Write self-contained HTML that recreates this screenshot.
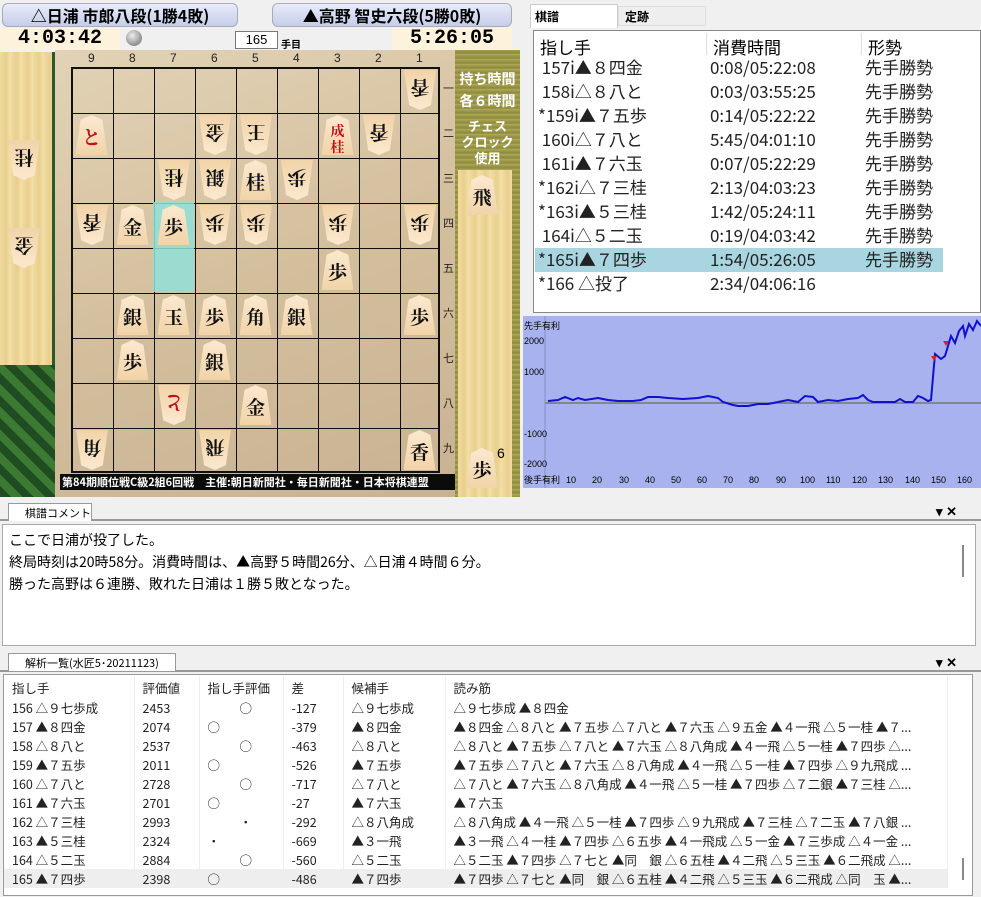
<!DOCTYPE html>
<html><head><meta charset="utf-8"><style>
*{margin:0;padding:0;box-sizing:border-box}
body{width:981px;height:897px;overflow:hidden;background:#f0f0f0;font-family:"Liberation Sans","Noto Sans CJK JP",sans-serif;position:relative}
.a{position:absolute}
.pc{position:absolute;width:32px;height:40px;background:linear-gradient(#fbe9cf,#f1d3a8);clip-path:polygon(50% 0,84% 12%,100% 100%,0 100%,16% 12%);font:bold 19px "Noto Serif CJK SC","Noto Sans CJK JP",serif;color:#111;text-align:center;line-height:44px}
.g{transform:rotate(180deg)}
.r{color:#c0101a}
.nb{font-size:12px;color:#222;position:absolute}
table{border-collapse:collapse}
.kf td{height:24px;line-height:24px;font:17px/24px "Noto Sans CJK JP",sans-serif;color:#222;white-space:nowrap;padding:0}
.kf tr{height:24px}
.an td{height:19px;font:12.5px "Noto Sans CJK JP",sans-serif;color:#222;white-space:nowrap;padding-left:8px;border-right:1px solid #eee}
.an tr:nth-child(even){background:#d8dae0}
</style></head><body>
<div class="a" style="left:2px;top:3px;width:236px;height:24px;border-radius:6px;background:linear-gradient(#e8ecfa,#c5cde8);border:1px solid #aab;font:bold 16px 'Noto Sans CJK JP';text-align:center;line-height:23px">△日浦 市郎八段(1勝4敗)</div>
<div class="a" style="left:272px;top:3px;width:240px;height:24px;border-radius:6px;background:linear-gradient(#e8ecfa,#c5cde8);border:1px solid #aab;font:bold 16px 'Noto Sans CJK JP';text-align:center;line-height:23px">▲高野 智史六段(5勝0敗)</div>
<div class="a" style="left:0;top:28px;width:120px;height:22px;background:#fdf3dc;font:bold 20px 'Liberation Mono',monospace;text-align:center;line-height:22px">4:03:42</div>
<div class="a" style="left:126px;top:30px;width:16px;height:16px;border-radius:50%;background:radial-gradient(circle at 40% 35%,#eee,#666)"></div>
<div class="a" style="left:235px;top:31px;width:43px;height:18px;background:#fff;border:1px solid #777;font:13px 'Liberation Sans';text-align:center;line-height:16px">165</div>
<div class="a" style="left:281px;top:36px;font:bold 10px 'Noto Sans CJK JP'">手目</div>
<div class="a" style="left:392px;top:28px;width:120px;height:22px;background:#fdf3dc;font:bold 20px 'Liberation Mono',monospace;text-align:center;line-height:22px">5:26:05</div>
<div class="a" style="left:0;top:52px;width:52px;height:313px;background:repeating-linear-gradient(90deg,#f0dba0,#e9cf8c 6px,#f3e0ab 11px)"></div>
<div class="a" style="left:0;top:365px;width:55px;height:132px;background:repeating-linear-gradient(45deg,#1f4d21 0 8px,#3c7a34 8px 16px)"></div>
<div class="a" style="left:52px;top:52px;width:4px;height:313px;background:#2b5a2a"></div>
<div class="a" style="left:55px;top:50px;width:402px;height:447px;background:linear-gradient(160deg,#e2d3b6,#d4bf9d 50%,#c8b292);"></div>
<div class="a" style="left:71px;top:67px;width:369px;height:406px;border:2px solid #111;background-image:linear-gradient(90deg,#111 1px,transparent 1px),linear-gradient(#111 1px,transparent 1px);background-size:41px 45px;background-position:-1px -1px"></div>
<div class="a" style="left:153px;top:202px;width:41px;height:90px;background:#8fe0d8;opacity:.85"></div>
<div class="a" style="left:60px;top:474px;width:395px;height:16px;background:#0b0b0b;color:#fff;font:bold 11px 'Noto Sans CJK JP';line-height:16px;padding-left:2px">第84期順位戦C級2組6回戦　主催:朝日新聞社・毎日新聞社・日本将棋連盟</div>
<div class="a" style="left:455px;top:50px;width:65px;height:447px;background:repeating-linear-gradient(#a8a050,#8c8a3c 3px,#b5ae62 5px)"></div>
<div class="a" style="left:458px;top:170px;width:54px;height:327px;background:repeating-linear-gradient(90deg,#f0dba0,#e9cf8c 6px,#f3e0ab 11px)"></div>
<div class="a" style="left:455px;top:68px;width:65px;color:#fff;font:bold 14px 'Noto Sans CJK JP';text-align:center;line-height:22px">持ち時間<br>各６時間</div>
<div class="a" style="left:455px;top:118px;width:65px;color:#fff;font:bold 13px 'Noto Sans CJK JP';text-align:center;line-height:16px">チェス<br>クロック<br>使用</div>
<div class="a" style="left:497px;top:445px;font:14px 'Liberation Sans'">6</div>
<div id="pcs"></div>
<div class="a" style="left:530px;top:4px;width:88px;height:24px;background:#fff;border:1px solid #ccc;border-bottom:none;font:bold 12px 'Noto Sans CJK JP';padding:3px 4px">棋譜</div>
<div class="a" style="left:618px;top:6px;width:88px;height:20px;background:#eee;border:1px solid #ddd;font:bold 12px 'Noto Sans CJK JP';padding:1px 6px">定跡</div>
<div class="a" style="left:533px;top:30px;width:448px;height:283px;background:#fff;border:1px solid #888"></div>
<div class="a" style="left:540px;top:34px;font:17px 'Noto Sans CJK JP'">指し手</div>
<div class="a" style="left:713px;top:34px;font:17px 'Noto Sans CJK JP'">消費時間</div>
<div class="a" style="left:868px;top:34px;font:17px 'Noto Sans CJK JP'">形勢</div>
<div class="a" style="left:706px;top:33px;width:1px;height:22px;background:#ddd"></div>
<div class="a" style="left:861px;top:33px;width:1px;height:22px;background:#ddd"></div>
<div class="a" style="left:535px;top:248px;width:408px;height:24px;background:#a9d5e0"></div>
<table class="a kf" style="left:538px;top:55px">
<tr><td style="width:172px">&nbsp;157i▲８四金</td><td style="width:155px">0:08/05:22:08</td><td>先手勝勢</td></tr>
<tr><td>&nbsp;158i△８八と</td><td>0:03/03:55:25</td><td>先手勝勢</td></tr>
<tr><td>*159i▲７五歩</td><td>0:14/05:22:22</td><td>先手勝勢</td></tr>
<tr><td>&nbsp;160i△７八と</td><td>5:45/04:01:10</td><td>先手勝勢</td></tr>
<tr><td>&nbsp;161i▲７六玉</td><td>0:07/05:22:29</td><td>先手勝勢</td></tr>
<tr><td>*162i△７三桂</td><td>2:13/04:03:23</td><td>先手勝勢</td></tr>
<tr><td>*163i▲５三桂</td><td>1:42/05:24:11</td><td>先手勝勢</td></tr>
<tr><td>&nbsp;164i△５二玉</td><td>0:19/04:03:42</td><td>先手勝勢</td></tr>
<tr><td>*165i▲７四歩</td><td>1:54/05:26:05</td><td>先手勝勢</td></tr>
<tr><td>*166 △投了</td><td>2:34/04:06:16</td><td></td></tr>
</table>
<svg class="a" style="left:523px;top:316px" width="458" height="172">
<rect width="458" height="172" fill="#a7b2ee"/>
<line x1="22" y1="87" x2="458" y2="87" stroke="#777" stroke-width="1.5"/>
<line x1="22" y1="0" x2="22" y2="172" stroke="#8890c0"/>
<g font-family="Liberation Sans" font-size="9" fill="#000">
<text x="1" y="13" font-family="Noto Sans CJK JP" font-size="9">先手有利</text>
<text x="1" y="28">2000</text><text x="1" y="59">1000</text><text x="1" y="121">-1000</text><text x="1" y="151">-2000</text>
<text x="1" y="167" font-family="Noto Sans CJK JP" font-size="9">後手有利</text>
<text x="43" y="167">10</text><text x="69" y="167">20</text><text x="96" y="167">30</text><text x="122" y="167">40</text><text x="148" y="167">50</text><text x="174" y="167">60</text><text x="200" y="167">70</text><text x="226" y="167">80</text><text x="253" y="167">90</text><text x="277" y="167">100</text><text x="303" y="167">110</text><text x="329" y="167">120</text><text x="355" y="167">130</text><text x="382" y="167">140</text><text x="408" y="167">150</text><text x="434" y="167">160</text>
</g>
<polyline fill="none" stroke="#1010d0" stroke-width="2" points="25,85 35,84 42,81 50,84 55,82 62,84 75,82 85,84 95,85 110,85 118,84 125,81 135,81 145,82 160,83 175,82 185,80 195,82 200,86 210,89 215,90 225,90 235,88 245,88 255,86 265,84 275,86 282,80 290,81 295,86 305,84 315,85 325,83 335,82 340,79 345,84 350,86 360,86 372,86 377,83 382,86 390,86 395,80 400,82 405,85 408,84 412,38 418,43 422,40 428,20 432,27 436,15 440,10 442,20 446,8 450,14 454,5 458,10"/>
<polygon points="408,40 414,40 411,45" fill="#e02020"/><polygon points="420,25 426,25 423,30" fill="#e02020"/>
</svg>
<div class="a" style="left:0;top:519px;width:981px;height:2px;background:#999"></div>
<div class="a" style="left:8px;top:503px;width:84px;height:18px;background:#fff;border:1px solid #999;border-bottom:none;font:11px 'Noto Sans CJK JP';padding:1px 0 0 16px">棋譜コメント</div>
<div class="a" style="left:936px;top:504px;font:bold 13px 'Liberation Sans'">▾ ✕</div>
<div class="a" style="left:2px;top:524px;width:974px;height:122px;background:#fff;border:1px solid #aaa;font:14px 'Noto Sans CJK JP';line-height:22px;padding:4px 6px">ここで日浦が投了した。<br>終局時刻は20時58分。消費時間は、▲高野５時間26分、△日浦４時間６分。<br>勝った高野は６連勝、敗れた日浦は１勝５敗となった。</div>
<div class="a" style="left:962px;top:545px;width:2px;height:32px;background:#888"></div>
<div class="a" style="left:0;top:670px;width:981px;height:2px;background:#999"></div>
<div class="a" style="left:8px;top:653px;width:168px;height:18px;background:#fff;border:1px solid #999;border-bottom:none;font:11px 'Noto Sans CJK JP';padding:1px 0 0 16px">解析一覧(水匠5･20211123)</div>
<div class="a" style="left:936px;top:655px;font:bold 13px 'Liberation Sans'">▾ ✕</div>
<div class="a" style="left:3px;top:674px;width:970px;height:222px;background:#fff;border:1px solid #999"></div>
<div class="a" style="left:962px;top:858px;width:2px;height:22px;background:#888"></div>
<table class="a an" style="left:4px;top:676px;width:944px">
<tr style="background:#fff"><td style="width:130px;height:22px">指し手</td><td style="width:65px">評価値</td><td style="width:84px">指し手評価</td><td style="width:60px">差</td><td style="width:102px">候補手</td><td>読み筋</td></tr>
<tr style="background:#fff"><td>156 △９七歩成</td><td>2453</td><td style="padding-left:40px">○</td><td>-127</td><td>△９七歩成</td><td>△９七歩成 ▲８四金</td></tr>
<tr><td>157 ▲８四金</td><td>2074</td><td>○</td><td>-379</td><td>▲８四金</td><td>▲８四金 △８八と ▲７五歩 △７八と ▲７六玉 △９五金 ▲４一飛 △５一桂 ▲７...</td></tr>
<tr style="background:#fff"><td>158 △８八と</td><td>2537</td><td style="padding-left:40px">○</td><td>-463</td><td>△８八と</td><td>△８八と ▲７五歩 △７八と ▲７六玉 △８八角成 ▲４一飛 △５一桂 ▲７四歩 △...</td></tr>
<tr><td>159 ▲７五歩</td><td>2011</td><td>○</td><td>-526</td><td>▲７五歩</td><td>▲７五歩 △７八と ▲７六玉 △８八角成 ▲４一飛 △５一桂 ▲７四歩 △９九飛成 ...</td></tr>
<tr style="background:#fff"><td>160 △７八と</td><td>2728</td><td style="padding-left:40px">○</td><td>-717</td><td>△７八と</td><td>△７八と ▲７六玉 △８八角成 ▲４一飛 △５一桂 ▲７四歩 △７二銀 ▲７三桂 △...</td></tr>
<tr><td>161 ▲７六玉</td><td>2701</td><td>○</td><td>-27</td><td>▲７六玉</td><td>▲７六玉</td></tr>
<tr style="background:#fff"><td>162 △７三桂</td><td>2993</td><td style="padding-left:40px">・</td><td>-292</td><td>△８八角成</td><td>△８八角成 ▲４一飛 △５一桂 ▲７四歩 △９九飛成 ▲７三桂 △７二玉 ▲７八銀 ...</td></tr>
<tr><td>163 ▲５三桂</td><td>2324</td><td>・</td><td>-669</td><td>▲３一飛</td><td>▲３一飛 △４一桂 ▲７四歩 △６五歩 ▲４一飛成 △５一金 ▲７三歩成 △４一金 ...</td></tr>
<tr style="background:#fff"><td>164 △５二玉</td><td>2884</td><td style="padding-left:40px">○</td><td>-560</td><td>△５二玉</td><td>△５二玉 ▲７四歩 △７七と ▲同　銀 △６五桂 ▲４二飛 △５三玉 ▲６二飛成 △...</td></tr>
<tr style="background:#eee"><td>165 ▲７四歩</td><td>2398</td><td>○</td><td>-486</td><td>▲７四歩</td><td>▲７四歩 △７七と ▲同　銀 △６五桂 ▲４二飛 △５三玉 ▲６二飛成 △同　玉 ▲...</td></tr>
</table>
<script>
var P=[[1,1,'香',1],[9,2,'と',0,1],[6,2,'金',1],[5,2,'王',1],[3,2,'成<br>桂',0,1],[2,2,'香',1],
[7,3,'桂',1],[6,3,'銀',1],[5,3,'桂',0],[4,3,'歩',1],
[9,4,'香',1],[8,4,'金',0],[7,4,'歩',0],[6,4,'歩',1],[5,4,'歩',1],[3,4,'歩',1],[1,4,'歩',1],
[3,5,'歩',0],[8,6,'銀',0],[7,6,'玉',0],[6,6,'歩',0],[5,6,'角',0],[4,6,'銀',0],[1,6,'歩',0],
[8,7,'歩',0],[6,7,'銀',0],[7,8,'と',1,1],[5,8,'金',0],[9,9,'角',1],[6,9,'飛',1],[1,9,'香',0]];
var h='';
P.forEach(function(p){var x=71+41*(9-p[0])+4.5,y=67+45*(p[1]-1)+3;
var st=p[2].length>1?'font-size:14px;line-height:16px;padding-top:8px':'';
h+='<div class="pc'+(p[3]?' g':'')+(p[4]?' r':'')+'" style="left:'+x+'px;top:'+y+'px;'+st+'">'+p[2]+'</div>';});
h+='<div class="pc g" style="left:8px;top:140px">桂</div><div class="pc g" style="left:8px;top:228px">金</div>';
h+='<div class="pc" style="left:466px;top:175px">飛</div><div class="pc" style="left:466px;top:448px">歩</div>';
var c=['9','8','7','6','5','4','3','2','1'];c.forEach(function(t,i){h+='<div class="nb" style="left:'+(88+41*i)+'px;top:51px">'+t+'</div>'});
'一二三四五六七八九'.split('').forEach(function(t,i){h+='<div class="nb" style="left:443px;top:'+(80+45*i)+'px;font-size:11px">'+t+'</div>'});
document.getElementById('pcs').innerHTML=h;
</script>
</body></html>
